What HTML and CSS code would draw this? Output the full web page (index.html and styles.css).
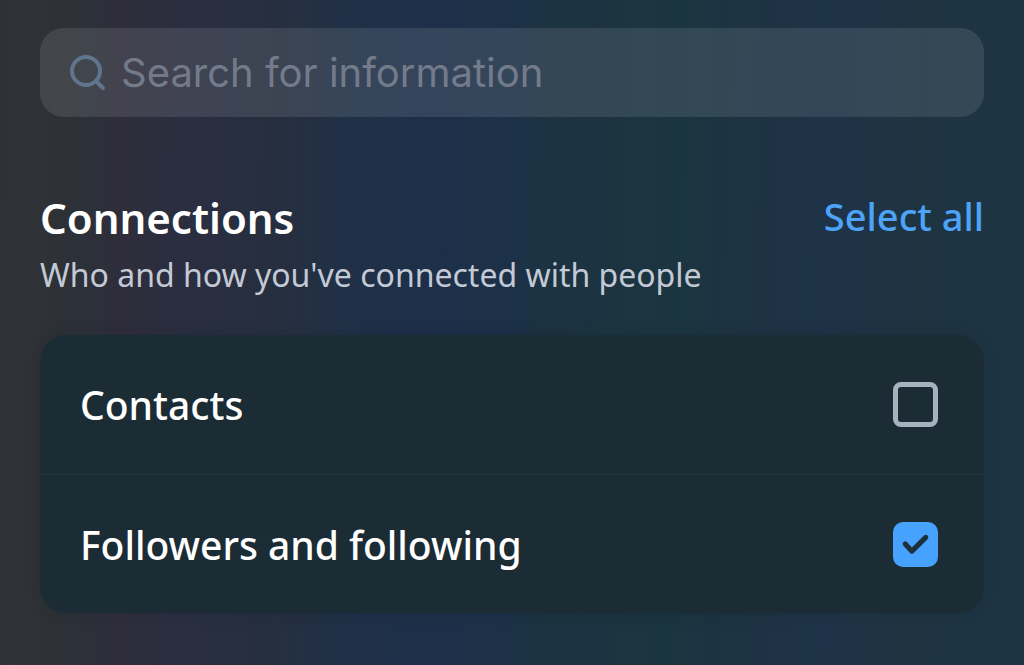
FILE: index.html
```html
<!DOCTYPE html>
<html lang="en">
<head>
<meta charset="utf-8">
<meta name="viewport" content="width=device-width, initial-scale=1">
<title>Connections</title>
<link rel="stylesheet" href="styles.css">
</head>
<body>
<main class="page">
  <form class="search" role="search">
    <svg class="search-icon" viewBox="0 0 36 36" aria-hidden="true"><circle cx="16" cy="16" r="14"/><path d="M26 26l7 7"/></svg>
    <input class="search-input" type="search" placeholder="Search for information" aria-label="Search for information">
  </form>
  <section class="section">
    <header class="section-header">
      <h1 class="title">Connections</h1>
      <button class="select-all" type="button">Select all</button>
    </header>
    <p class="subtitle">Who and how you've connected with people</p>
    <div class="card">
      <label class="row" for="contacts"><span>Contacts</span><input class="check" id="contacts" type="checkbox"></label>
      <label class="row" for="followers"><span>Followers and following</span>
        <span class="check-wrap"><input class="check" id="followers" type="checkbox" checked><svg class="tick" viewBox="0 0 44 44" aria-hidden="true"><path d="M12 21.500l6.500 7L32 15"/></svg></span>
      </label>
    </div>
  </section>
</main>
</body>
</html>
```
FILE: styles.css
```css
* {
  box-sizing: border-box;
}

body {
  margin: 0;
  min-height: 100vh;
  font-family: "Noto Sans", sans-serif;
  color: #fff;
  background: linear-gradient(91deg, #2c3233 0%, #31323a 2%, #2e3235 5%, #2c3039 9%, #2f2d3b 12%, #2a2e40 18%, #262f3f 27%, #213046 33%, #1e2f49 40%, #1c3148 50%, #1c3341 53%, #1b3540 66%, #1d3344 74%, #1e3347 81%, #1e3441 89%, #1d3445 100%);
}

.page {
  padding: 28px 40px 52px;
}

.search {
  display: flex;
  align-items: center;
  gap: 15px;
  height: 89px;
  padding: 0 30px;
  border-radius: 24px;
  background: rgba(255, 255, 255, 0.1);
}

.search-icon {
  flex: none;
  width: 36px;
  height: 36px;
  fill: none;
  stroke: #60758d;
  stroke-width: 4;
  stroke-linecap: round;
}

.search-input {
  flex: 1;
  min-width: 0;
  padding: 0;
  border: 0;
  outline: 0;
  background: none;
  color: #fff;
  font: 400 40px/52px Inter, sans-serif;
}

.search-input::placeholder {
  color: #737b8b;
  opacity: 1;
}

.section {
  padding-top: 72px;
}

.section-header {
  display: flex;
  align-items: center;
  justify-content: space-between;
}

.title {
  margin: 0;
  font-size: 42px;
  font-weight: 600;
  line-height: 58px;
}

.select-all {
  padding: 0 0 4px;
  border: 0;
  background: none;
  color: #4da3f8;
  font: 500 38px/52px "Noto Sans", sans-serif;
}

.subtitle {
  margin: 8px 0 40px;
  color: #c3cad6;
  font-size: 32px;
  line-height: 40px;
}

.card {
  border-radius: 26px;
  background: #1b2c35;
  box-shadow: 0 0 16px rgba(20, 32, 42, 0.2);
}

.row {
  display: flex;
  align-items: center;
  justify-content: space-between;
  height: 139px;
  padding: 0 46px 0 40px;
  font-size: 39px;
  font-weight: 500;
}

.row + .row {
  border-top: 1px solid #24363e;
}

.check {
  display: block;
  appearance: none;
  width: 45px;
  height: 45px;
  margin: 0;
  border: 5px solid #a5b2bf;
  border-radius: 8px;
}

.check:checked {
  border-color: #46a2fc;
  border-radius: 10px;
  background: #46a2fc;
}

.check-wrap {
  position: relative;
}

.tick {
  position: absolute;
  inset: 0;
  fill: none;
  stroke: #1b2f3c;
  stroke-width: 5;
  stroke-linecap: round;
  stroke-linejoin: round;
  pointer-events: none;
}

.check:not(:checked) + .tick {
  display: none;
}
```
